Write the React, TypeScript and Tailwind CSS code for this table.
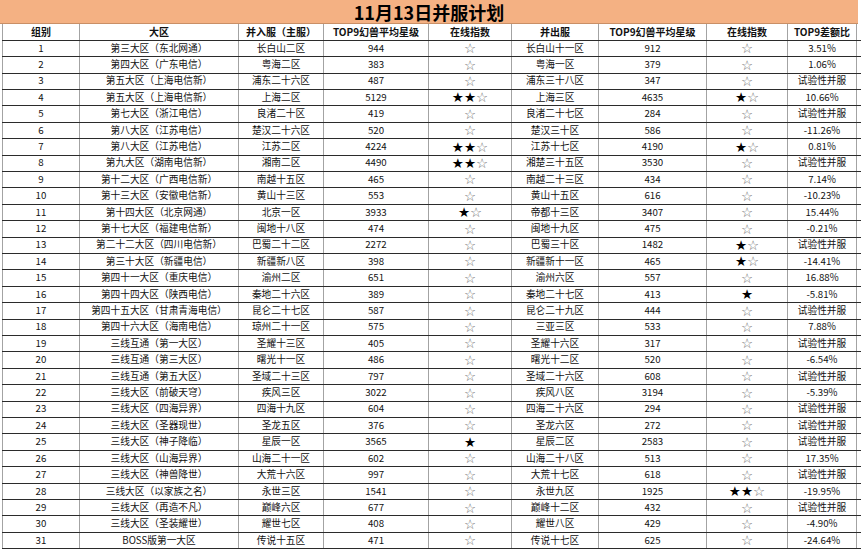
import React from "react";

type Row = [string, string, string, string, string, string, string, string];

const rows: Row[] = [
  ["第三大区（东北网通）", "长白山二区", "944", "☆", "长白山十一区", "912", "☆", "3.51%"],
  ["第四大区（广东电信）", "粤海二区", "383", "☆", "粤海一区", "379", "☆", "1.06%"],
  ["第五大区（上海电信新）", "浦东二十六区", "487", "☆", "浦东三十八区", "347", "☆", "试验性并服"],
  ["第五大区（上海电信新）", "上海二区", "5129", "★★☆", "上海三区", "4635", "★☆", "10.66%"],
  ["第七大区（浙江电信）", "良渚二十区", "419", "☆", "良渚二十七区", "284", "☆", "试验性并服"],
  ["第八大区（江苏电信）", "楚汉二十六区", "520", "☆", "楚汉三十区", "586", "☆", "-11.26%"],
  ["第八大区（江苏电信）", "江苏二区", "4224", "★★☆", "江苏十七区", "4190", "★☆", "0.81%"],
  ["第九大区（湖南电信新）", "湘南二区", "4490", "★★☆", "湘楚三十五区", "3530", "☆", "试验性并服"],
  ["第十二大区（广西电信新）", "南越十五区", "465", "☆", "南越二十三区", "434", "☆", "7.14%"],
  ["第十三大区（安徽电信新）", "黄山十三区", "553", "☆", "黄山十五区", "616", "☆", "-10.23%"],
  ["第十四大区（北京网通）", "北京一区", "3933", "★☆", "帝都十三区", "3407", "☆", "15.44%"],
  ["第十七大区（福建电信新）", "闽地十八区", "474", "☆", "闽地十九区", "475", "☆", "-0.21%"],
  ["第二十二大区（四川电信新）", "巴蜀二十二区", "2272", "☆", "巴蜀三十区", "1482", "★☆", "试验性并服"],
  ["第三十大区（新疆电信）", "新疆新八区", "398", "☆", "新疆新十一区", "465", "★☆", "-14.41%"],
  ["第四十一大区（重庆电信）", "渝州二区", "651", "☆", "渝州六区", "557", "☆", "16.88%"],
  ["第四十四大区（陕西电信）", "秦地二十六区", "389", "☆", "秦地二十七区", "413", "★", "-5.81%"],
  ["第四十五大区（甘肃青海电信）", "昆仑二十七区", "587", "☆", "昆仑二十九区", "444", "☆", "试验性并服"],
  ["第四十六大区（海南电信）", "琼州二十一区", "575", "☆", "三亚三区", "533", "☆", "7.88%"],
  ["三线互通（第一大区）", "圣耀十三区", "405", "☆", "圣耀十六区", "317", "☆", "试验性并服"],
  ["三线互通（第三大区）", "曙光十一区", "486", "☆", "曙光十二区", "520", "☆", "-6.54%"],
  ["三线互通（第五大区）", "圣域二十三区", "797", "☆", "圣域二十六区", "608", "☆", "试验性并服"],
  ["三线大区（前破天穹）", "疾风三区", "3022", "☆", "疾风八区", "3194", "☆", "-5.39%"],
  ["三线大区（四海异界）", "四海十九区", "604", "☆", "四海二十六区", "294", "☆", "试验性并服"],
  ["三线大区（圣器现世）", "圣龙五区", "376", "☆", "圣龙六区", "272", "☆", "试验性并服"],
  ["三线大区（神子降临）", "星辰一区", "3565", "★", "星辰二区", "2583", "☆", "试验性并服"],
  ["三线大区（山海异界）", "山海二十一区", "602", "☆", "山海二十八区", "513", "☆", "17.35%"],
  ["三线大区（神兽降世）", "大荒十六区", "997", "☆", "大荒十七区", "618", "☆", "试验性并服"],
  ["三线大区（以家族之名）", "永世三区", "1541", "☆", "永世九区", "1925", "★★☆", "-19.95%"],
  ["三线大区（再造不凡）", "巅峰六区", "677", "☆", "巅峰十二区", "432", "☆", "试验性并服"],
  ["三线大区（圣装耀世）", "耀世七区", "408", "☆", "耀世八区", "429", "☆", "-4.90%"],
  ["BOSS版第一大区", "传说十五区", "471", "☆", "传说十七区", "625", "☆", "-24.64%"],
];

const headers = [
  "组别",
  "大区",
  "并入服（主服）",
  "TOP9幻兽平均星级",
  "在线指数",
  "并出服",
  "TOP9幻兽平均星级",
  "在线指数",
  "TOP9差额比",
];

const grid =
  "grid grid-cols-[78px_159px_85px_105px_83px_87px_108px_81px_69px] border-b border-[#2b2b2b]";
const cell =
  "flex items-center justify-center overflow-hidden whitespace-nowrap border-r border-[#a3a3a3]";

// 星星：实心黑色，空心灰色细线
function Stars({ value }: { value: string }) {
  return (
    <span className="font-['DejaVu_Sans',sans-serif] text-[13.5px] leading-none pt-[1px]">
      {value.split("").map((s, i) =>
        s === "★" ? (
          <span key={i} className="text-black">
            ★
          </span>
        ) : (
          <span key={i} className="text-[#707070]">
            ☆
          </span>
        )
      )}
    </span>
  );
}

export default function App() {
  return (
    <div className="w-[861px] h-[550px] overflow-hidden bg-white text-[#111] font-['Noto_Sans_CJK_SC','Noto_Sans',sans-serif]">
      <div className="w-[858px] h-[24px] bg-[#f4b183] border-b border-[#c98f66] flex items-center justify-center text-[18px] font-bold leading-none text-black">
        11月13日并服计划
      </div>
      <div className="pl-[2px]">
        <div className={`${grid} h-[16.7px] text-[10px] font-bold leading-none`}>
          {headers.map((h, i) => (
            <div key={i} className={`${cell} ${i === 0 ? "border-l" : ""}`}>
              {h}
            </div>
          ))}
        </div>
        {rows.map((r, idx) => (
          <div key={idx} className={`${grid} h-[16.42px] text-[9.7px] leading-none`}>
            <div className={`${cell} border-l`}>{idx + 1}</div>
            <div className={cell}>{r[0]}</div>
            <div className={cell}>{r[1]}</div>
            <div className={cell}>{r[2]}</div>
            <div className={cell}>
              <Stars value={r[3]} />
            </div>
            <div className={cell}>{r[4]}</div>
            <div className={cell}>{r[5]}</div>
            <div className={cell}>
              <Stars value={r[6]} />
            </div>
            <div className={cell}>{r[7]}</div>
          </div>
        ))}
      </div>
    </div>
  );
}
